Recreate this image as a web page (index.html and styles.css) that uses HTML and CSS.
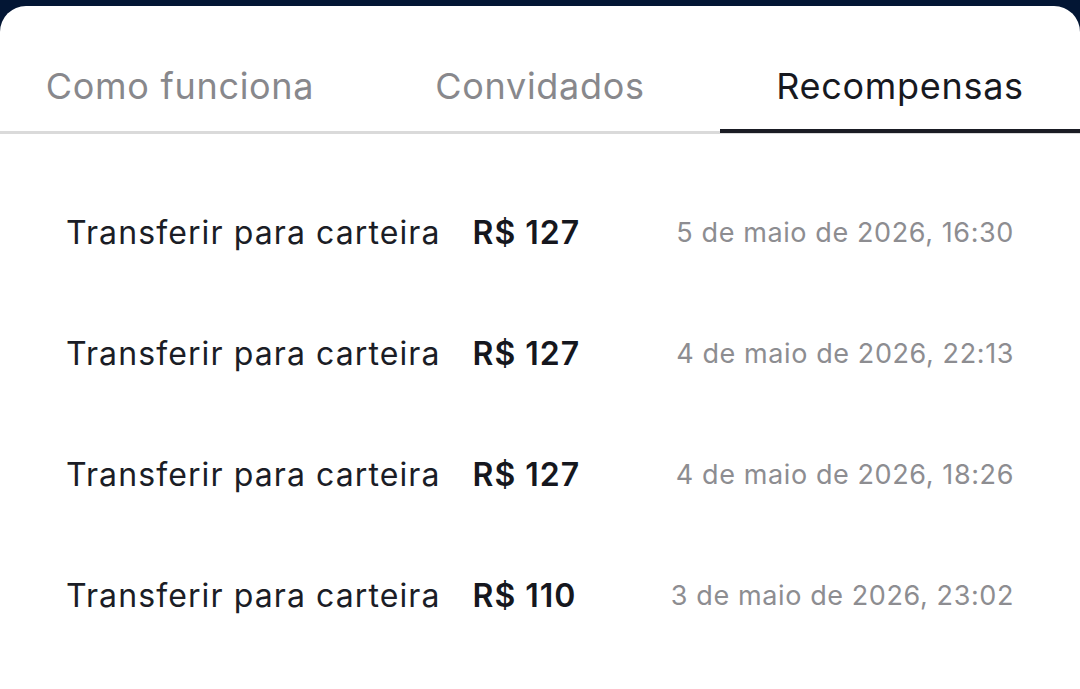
FILE: index.html
```html
<!DOCTYPE html>
<html lang="pt-BR">

<head>
    <meta charset="UTF-8">
    <meta name="viewport" content="width=device-width, initial-scale=1.0">
    <title>Recompensas</title>
    <link rel="stylesheet" href="styles.css">
</head>

<body>
    <div class="sheet">
        <!-- tabs -->
        <div class="tabs">
            <div class="tab">Como funciona</div>
            <div class="tab">Convidados</div>
            <div class="tab tab_active">Recompensas</div>
        </div>

        <!-- rewards list -->
        <div class="rewards">
            <div class="reward_row">
                <span class="reward_label">Transferir para carteira</span>
                <span class="reward_amount">R$ 127</span>
                <span class="reward_date">5 de maio de 2026, 16:30</span>
            </div>
            <div class="reward_row">
                <span class="reward_label">Transferir para carteira</span>
                <span class="reward_amount">R$ 127</span>
                <span class="reward_date">4 de maio de 2026, 22:13</span>
            </div>
            <div class="reward_row">
                <span class="reward_label">Transferir para carteira</span>
                <span class="reward_amount">R$ 127</span>
                <span class="reward_date">4 de maio de 2026, 18:26</span>
            </div>
            <div class="reward_row">
                <span class="reward_label">Transferir para carteira</span>
                <span class="reward_amount">R$ 110</span>
                <span class="reward_date">3 de maio de 2026, 23:02</span>
            </div>
        </div>
    </div>
</body>

</html>
```

FILE: styles.css
```css
* {
    margin: 0;
    padding: 0;
    box-sizing: border-box;
    font-family: Inter, "Noto Sans", Arial, sans-serif;
}

body {
    width: 100%;
    height: 689px;
    overflow: hidden;
    background-color: #031634;
    padding-top: 6px;
}

.sheet {
    background-color: #fff;
    border-radius: 26px 26px 0 0;
    height: 100%;
}

.tabs {
    display: grid;
    grid-template-columns: 1fr 1fr 1fr;
    border-bottom: solid 3px #dadada;
    padding-top: 28px;
}

.tab {
    text-align: center;
    font-size: 36px;
    color: #88888c;
    height: 97px;
    padding-top: 30px;
    letter-spacing: 0.7px;
}

.tab_active {
    color: #17191f;
    height: 99px;
    border-bottom: solid 4px #1a1c24;
    margin-bottom: -3px;
}

.rewards {
    padding: 38px 66px 0 66px;
}

.reward_row {
    display: grid;
    grid-template-columns: max-content max-content 1fr;
    column-gap: 32px;
    align-items: center;
    height: 121px;
}

.reward_label {
    font-size: 32px;
    color: #1b1d26;
    letter-spacing: 1.1px;
}

.reward_amount {
    font-size: 32px;
    font-weight: 600;
    color: #15171e;
    letter-spacing: 1px;
}

.reward_date {
    font-size: 27px;
    color: #8d8d91;
    text-align: right;
    letter-spacing: 0.6px;
}
```
